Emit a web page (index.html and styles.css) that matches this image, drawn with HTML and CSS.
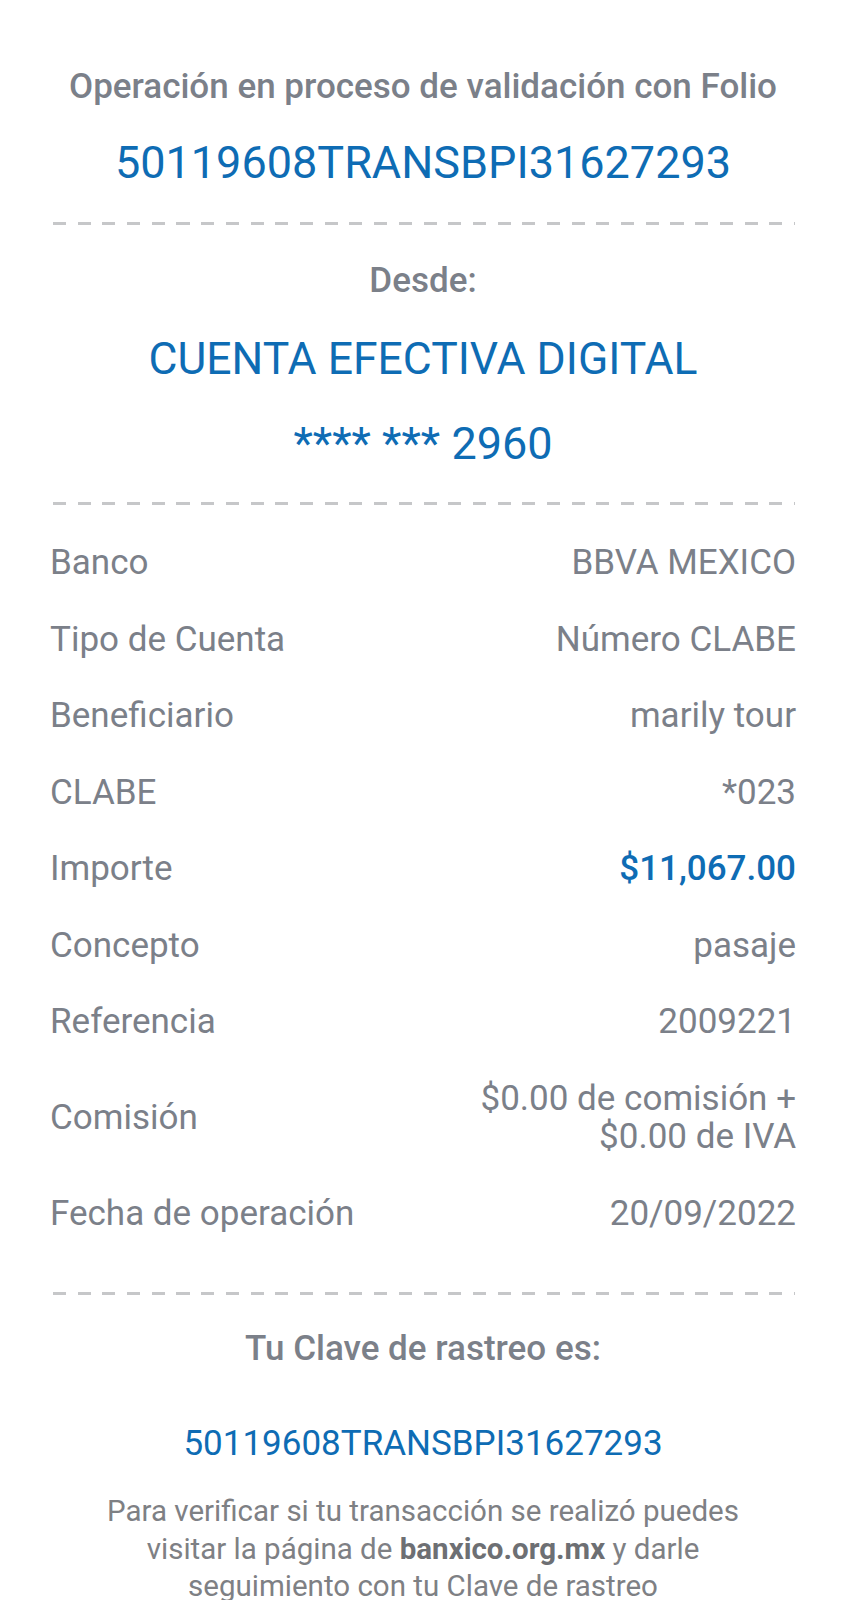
FILE: index.html
```html
<!DOCTYPE html>
<html lang="es">
<head>
    <meta charset="UTF-8">
    <meta name="viewport" content="width=device-width, initial-scale=1.0">
    <title>Comprobante de transferencia</title>
    <link rel="stylesheet" href="styles.css">
</head>
<body>
    <div class="receipt">
        <!-- Folio -->
        <div class="folio">
            <p class="folio-title">Operación en proceso de validación con Folio</p>
            <p class="folio-number">50119608TRANSBPI31627293</p>
        </div>

        <div class="dashed"></div>

        <!-- Cuenta origen -->
        <div class="origin">
            <p class="origin-label">Desde:</p>
            <p class="origin-account">CUENTA EFECTIVA DIGITAL</p>
            <p class="origin-number">**** *** 2960</p>
        </div>

        <div class="dashed"></div>

        <!-- Detalle -->
        <div class="details">
            <div class="row"><span class="label">Banco</span><span class="value">BBVA MEXICO</span></div>
            <div class="row"><span class="label">Tipo de Cuenta</span><span class="value">Número CLABE</span></div>
            <div class="row"><span class="label">Beneficiario</span><span class="value">marily tour</span></div>
            <div class="row"><span class="label">CLABE</span><span class="value">*023</span></div>
            <div class="row"><span class="label">Importe</span><span class="value amount">$11,067.00</span></div>
            <div class="row"><span class="label">Concepto</span><span class="value">pasaje</span></div>
            <div class="row"><span class="label">Referencia</span><span class="value">2009221</span></div>
            <div class="row"><span class="label">Comisión</span><span class="value">$0.00 de comisión +<br>$0.00 de IVA</span></div>
            <div class="row"><span class="label">Fecha de operación</span><span class="value">20/09/2022</span></div>
        </div>

        <div class="dashed dashed-bottom"></div>

        <!-- Clave de rastreo -->
        <div class="tracking">
            <p class="tracking-title">Tu Clave de rastreo es:</p>
            <p class="tracking-code">50119608TRANSBPI31627293</p>
            <p class="tracking-note">Para verificar si tu transacción se realizó puedes visitar la página de <strong>banxico.org.mx</strong> y darle seguimiento con tu Clave de rastreo</p>
        </div>
    </div>
</body>
</html>
```

FILE: styles.css
```css
body {
    font-family: Roboto, "Noto Sans", Arial, sans-serif;
    margin: 0;
    padding: 0;
    background-color: #fff;
    color: #7b8089;
}
p {
    margin: 0;
}
.receipt {
    padding: 0 51px 0 50px;
}
.folio,
.origin,
.tracking {
    text-align: center;
}
.folio-title {
    margin-top: 67px;
    font-size: 35px;
    font-weight: 500;
    line-height: 40px;
    white-space: nowrap;
}
.folio-number {
    margin-top: 31px;
    font-size: 45px;
    line-height: 50px;
    color: #0e6cb4;
}
.dashed {
    height: 3px;
    margin: 34px 1px 0 2.5px;
    background: repeating-linear-gradient(to right, #c6c7c9 0 13px, transparent 13px 24.7px);
}
.origin-label {
    margin-top: 36px;
    font-size: 35px;
    font-weight: 500;
    line-height: 40px;
}
.origin-account {
    margin-top: 33px;
    font-size: 44.5px;
    line-height: 50px;
    color: #0e6cb4;
}
.origin-number {
    margin-top: 35px;
    margin-bottom: 33px;
    font-size: 45px;
    line-height: 50px;
    color: #0e6cb4;
}
.origin + .dashed {
    margin-top: 0;
}
.details {
    margin-top: 20px;
}
.row {
    display: flex;
    justify-content: space-between;
    align-items: center;
    gap: 20px;
    padding: 19px 0;
    font-size: 35px;
    line-height: 38.5px;
}
.value {
    text-align: right;
}
.amount {
    color: #0e6cb4;
    font-weight: 500;
}
.dashed-bottom {
    margin-top: 40px;
}
.tracking-title {
    margin-top: 34px;
    font-size: 35px;
    font-weight: 500;
    line-height: 40px;
}
.tracking-code {
    margin-top: 55px;
    font-size: 35px;
    line-height: 40px;
    color: #0e6cb4;
}
.tracking-note {
    margin: 29px auto 0;
    max-width: 660px;
    font-size: 29.5px;
    line-height: 37.5px;
    color: #7e8084;
}
.tracking-note strong {
    font-weight: 700;
    color: #6d6f73;
}
```
